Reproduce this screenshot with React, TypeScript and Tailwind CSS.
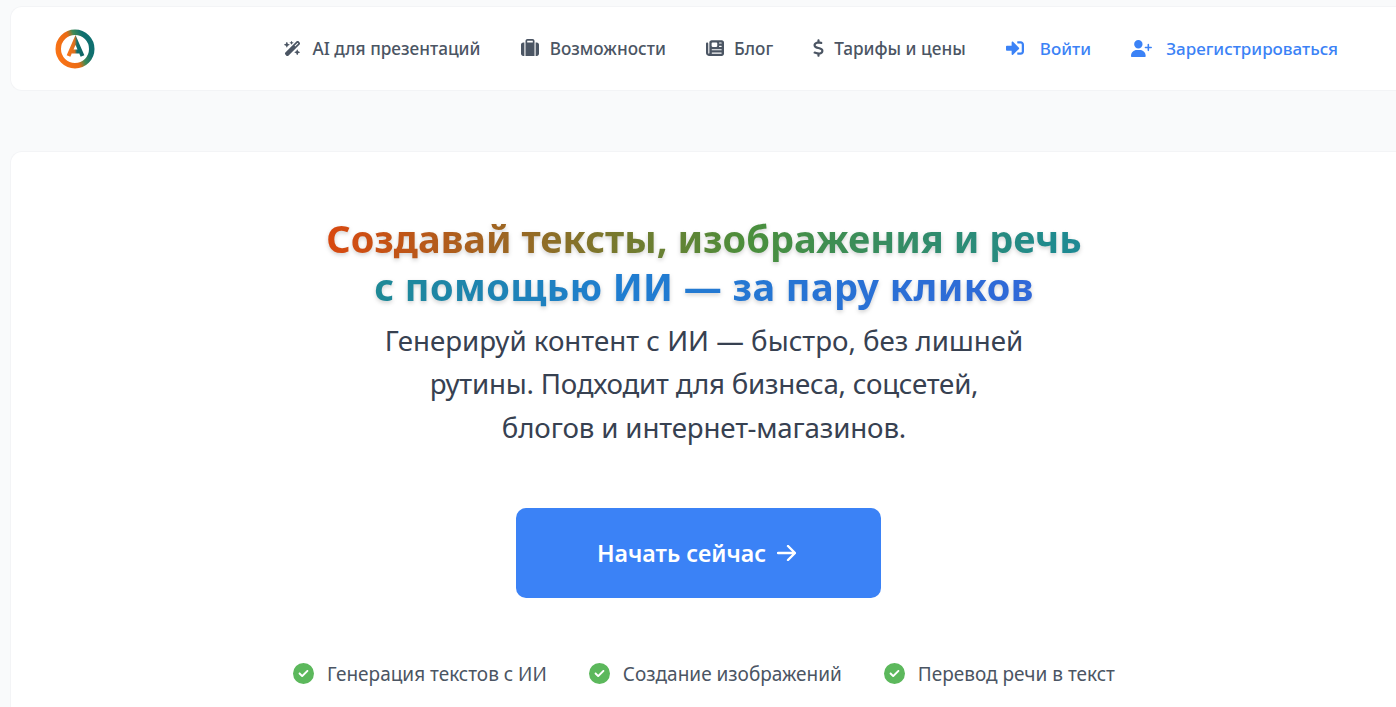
import React from 'react';
import { FaSignInAlt } from 'react-icons/fa';
import {
  FaWandMagicSparkles,
  FaSuitcase,
  FaNewspaper,
  FaDollarSign,
  FaUserPlus,
  FaCircleCheck,
} from 'react-icons/fa6';

const NavItem: React.FC<{ icon: React.ReactNode; label: string; gap: string; blue?: boolean }> = ({ icon, label, gap, blue }) => (
  <a className={`flex items-center ${gap} font-medium ${blue ? 'text-[17px] text-[#3b82f6]' : 'text-[17.2px] text-[#4b5563]'}`}>
    {icon}
    <span>{label}</span>
  </a>
);

const Feature: React.FC<{ label: string }> = ({ label }) => (
  <div className="flex items-center gap-[13px]">
    <FaCircleCheck className="-translate-y-px text-[21px] text-[#5cb85c]" />
    <span className="text-[19px] text-[#4b5563]">{label}</span>
  </div>
);

const Logo = () => (
  <svg width="40" height="40" viewBox="0 0 40 40">
    <defs>
      <linearGradient id="ring" x1="0" y1="0.7" x2="1" y2="0.3">
        <stop offset="0" stopColor="#f97316" />
        <stop offset="0.45" stopColor="#ea6a14" />
        <stop offset="0.62" stopColor="#3f8a55" />
        <stop offset="0.85" stopColor="#0f6f6f" />
      </linearGradient>
      <linearGradient id="letter" gradientUnits="userSpaceOnUse" x1="13" y1="20" x2="28" y2="20">
        <stop offset="0" stopColor="#f97316" />
        <stop offset="0.45" stopColor="#d9701f" />
        <stop offset="0.6" stopColor="#0f6f6f" />
        <stop offset="1" stopColor="#0f6464" />
      </linearGradient>
    </defs>
    <circle cx="20" cy="20" r="16.75" fill="none" stroke="url(#ring)" strokeWidth="5.5" />
    <path d="M13.5 27 L20.5 11 L27.5 27 M17 22.5 H24" fill="none" stroke="url(#letter)" strokeWidth="4" />
  </svg>
);

export default function App() {
  return (
    <div className="min-h-[707px] overflow-hidden bg-[#f9fafb] pl-[10px] pt-[6px] font-['Noto_Sans',sans-serif]">
      <header className="flex h-[85px] items-center justify-between rounded-l-xl border border-r-0 border-[#f3f4f6] bg-white pl-[44px] pr-[58px]">
        <Logo />
        <nav className="flex items-center gap-[40.2px]">
          <NavItem gap="gap-[12px]" icon={<FaWandMagicSparkles className="text-[17px]" />} label="AI для презентаций" />
          <NavItem gap="gap-[11px]" icon={<FaSuitcase className="text-[18px]" />} label="Возможности" />
          <NavItem gap="gap-[10px]" icon={<FaNewspaper className="text-[18px]" />} label="Блог" />
          <NavItem gap="gap-[10px]" icon={<FaDollarSign className="w-[11px] text-[18px]" />} label="Тарифы и цены" />
          <NavItem blue gap="gap-[16px]" icon={<FaSignInAlt className="text-[18px]" />} label="Войти" />
          <NavItem blue gap="gap-[14px]" icon={<FaUserPlus className="text-[21px]" />} label="Зарегистрироваться" />
        </nav>
      </header>

      <main className="mt-[60px] flex flex-col items-center rounded-l-xl border border-r-0 border-[#f3f4f6] bg-white pb-8 pl-[1px] pt-[62px]">
        <h1 className="text-center text-[38px] font-bold leading-[48px] drop-shadow-[0_2px_2px_rgba(0,0,0,0.18)]">
          <span className="bg-[linear-gradient(90deg,#d9480f_0%,#4a8f3c_30%,#1e8a90_52%,#1f7ed0_70%,#3068d8_100%)] bg-clip-text text-transparent">
            Создавай тексты, изображения и речь
            <br />
            <span className="tracking-[0.4px]">с помощью ИИ — за пару кликов</span>
          </span>
        </h1>
        <p className="mt-[8.6px] w-[680px] text-center text-[27.7px] leading-[43.5px] text-[#374151]">
          Генерируй контент с ИИ — быстро, без лишней
          <br />
          <span className="tracking-[-0.23px]">рутины. Подходит для бизнеса, соцсетей,</span>
          <br />
          <span className="tracking-[-0.14px]">блогов и интернет-магазинов.</span>
        </p>
        <button className="mr-[11px] mt-[59px] flex h-[90px] w-[365px] items-center justify-center gap-[11px] rounded-[10px] bg-[#3b82f6] pr-[4px] text-[23.2px] font-semibold text-white">
          Начать сейчас
          <svg width="19" height="16" viewBox="0 0 19 16" fill="none" stroke="currentColor" strokeWidth="2.4" strokeLinecap="round" strokeLinejoin="round">
            <path d="M1 8H18M11 1l7 7-7 7" />
          </svg>
        </button>
        <div className="mt-[62px] flex items-center gap-[42px]">
          <Feature label="Генерация текстов с ИИ" />
          <Feature label="Создание изображений" />
          <Feature label="Перевод речи в текст" />
        </div>
      </main>
    </div>
  );
}
